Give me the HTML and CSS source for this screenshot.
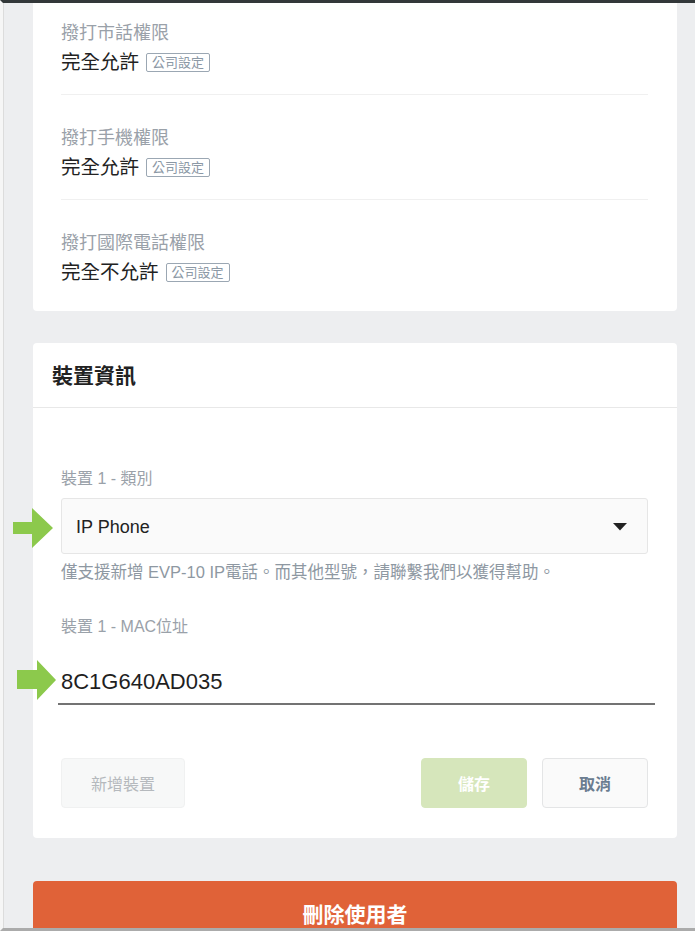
FILE: index.html
```html
<!DOCTYPE html>
<html lang="zh-Hant">
<head>
    <meta charset="UTF-8">
    <meta name="viewport" content="width=device-width, initial-scale=1.0">
    <title>使用者設定</title>
    <link rel="stylesheet" href="styles.css">
</head>
<body>
    <div class="screen">
        <div class="screen-inner">
            <!-- permissions card (scrolled, top is cut off) -->
            <section class="card card-perm">
                <div class="perm-item">
                    <div class="perm-label">撥打市話權限</div>
                    <div class="perm-value">完全允許 <span class="tag">公司設定</span></div>
                </div>
                <div class="perm-item">
                    <div class="perm-label">撥打手機權限</div>
                    <div class="perm-value">完全允許 <span class="tag">公司設定</span></div>
                </div>
                <div class="perm-item">
                    <div class="perm-label">撥打國際電話權限</div>
                    <div class="perm-value">完全不允許 <span class="tag">公司設定</span></div>
                </div>
            </section>

            <section class="card card-device">
                <h2 class="card-title">裝置資訊</h2>
                <div class="card-body">
                    <div class="field">
                        <div class="field-label">裝置 1 - 類別</div>
                        <div class="select-box">
                            <span>IP Phone</span>
                            <svg class="caret" width="14" height="8" viewBox="0 0 14 8"><path d="M0 0h14L7 7.5z" fill="#222"/></svg>
                            <svg class="pointer pointer-select" width="40" height="40" viewBox="0 0 40 40"><path d="M0 14h19V0l21 20-21 20V26H0z" fill="#8cc94c"/></svg>
                        </div>
                        <div class="field-help">僅支援新增 EVP-10 IP電話。而其他型號，請聯繫我們以獲得幫助。</div>
                    </div>

                    <div class="field field-mac">
                        <div class="field-label">裝置 1 - MAC位址</div>
                        <div class="text-input">
                            8C1G640AD035
                            <svg class="pointer pointer-mac" width="39" height="40" viewBox="0 0 39 40"><path d="M0 10h20V0l19 20-19 20V29H0z" fill="#8cc94c"/></svg>
                        </div>
                    </div>

                    <div class="actions">
                        <button class="btn btn-add">新增裝置</button>
                        <div class="actions-right">
                            <button class="btn btn-save">儲存</button>
                            <button class="btn btn-cancel">取消</button>
                        </div>
                    </div>
                </div>
            </section>

            <button class="btn-delete">刪除使用者</button>
        </div>
    </div>
</body>
</html>
```

FILE: styles.css
```css
body {
    margin: 0;
    background-color: #fff;
    font-family: "Liberation Sans", "Noto Sans CJK TC", sans-serif;
}
.screen {
    width: 695px;
    height: 931px;
    box-sizing: border-box;
    border-top: 3px solid #33383a;
    border-left: 3px solid #f6f6f6;
    border-bottom: 3px solid #ababab;
    background-color: #edeef0;
    overflow: hidden;
}
.screen-inner {
    height: 100%;
    padding: 0 18px 0 30px;
    box-shadow: inset 1px 0 0 #dcdcdc;
}
.card {
    background-color: #fff;
    border-radius: 4px;
}
.card-perm {
    border-radius: 0 0 4px 4px;
    padding: 0 29px 0 28px;
}
.perm-item {
    padding: 31px 0 18px;
    border-bottom: 1px solid #f0f0f0;
}
.perm-item:first-child {
    padding-top: 18px;
}
.perm-item:last-child {
    border-bottom: none;
    padding-bottom: 25px;
}
.perm-label {
    font-size: 18px;
    line-height: 24px;
    color: #9aa1a9;
}
.perm-value {
    display: flex;
    align-items: center;
    margin-top: 3px;
    font-size: 19.5px;
    line-height: 28px;
    color: #222;
}
.tag {
    margin-left: 7px;
    padding: 0 5px;
    border: 1px solid #9ba7b3;
    border-radius: 2px;
    font-size: 13px;
    line-height: 17px;
    color: #8b98a5;
}
.card-device {
    margin-top: 32px;
}
.card-title {
    margin: 0;
    padding: 18px 19px 16px;
    border-bottom: 1px solid #e8e8e8;
    font-size: 21px;
    line-height: 30px;
    font-weight: bold;
    color: #222;
}
.card-body {
    padding: 60px 29px 30px 28px;
}
.field-label {
    font-size: 16px;
    line-height: 22px;
    color: #9aa1a9;
}
.select-box {
    position: relative;
    display: flex;
    align-items: center;
    justify-content: space-between;
    height: 56px;
    box-sizing: border-box;
    margin-top: 8px;
    padding: 3px 20px 0 14px;
    background-color: #fafafa;
    border: 1px solid #e6e6e6;
    border-radius: 3px;
    font-size: 18px;
    color: #222;
}
.caret {
    margin-top: -2px;
}
.pointer {
    position: absolute;
}
.pointer-select {
    left: -49px;
    top: 9px;
}
.field-help {
    margin-top: 7px;
    font-size: 16.5px;
    line-height: 22px;
    color: #8e98a2;
}
.field-mac {
    margin-top: 33px;
}
.text-input {
    position: relative;
    margin: 29px -7px 0 -3px;
    padding: 0 0 6px 3px;
    border-bottom: 2px solid #737373;
    font-size: 22px;
    line-height: 30px;
    color: #1f1f1f;
}
.pointer-mac {
    left: -41px;
    top: -7px;
}
.actions {
    display: flex;
    justify-content: space-between;
    margin-top: 53px;
}
.actions-right {
    display: flex;
    gap: 15px;
}
.btn {
    height: 50px;
    box-sizing: border-box;
    border-radius: 4px;
    font-family: inherit;
    font-size: 16px;
    cursor: pointer;
}
.btn-add {
    width: 124px;
    background-color: #f7f8f8;
    border: 1px solid #f0f1f1;
    color: #b5b9bd;
}
.btn-save {
    width: 106px;
    background-color: #d6e6bb;
    border: 1px solid #d6e6bb;
    color: #fff;
    font-weight: bold;
}
.btn-cancel {
    width: 106px;
    background-color: #fafafa;
    border: 1px solid #e4e5e6;
    color: #6b7d90;
    font-weight: bold;
}
.btn-delete {
    display: block;
    width: 100%;
    height: 64px;
    margin-top: 43px;
    background-color: #e06238;
    border: none;
    border-radius: 4px;
    font-family: inherit;
    font-size: 21px;
    font-weight: bold;
    color: #fff;
    cursor: pointer;
}
```
